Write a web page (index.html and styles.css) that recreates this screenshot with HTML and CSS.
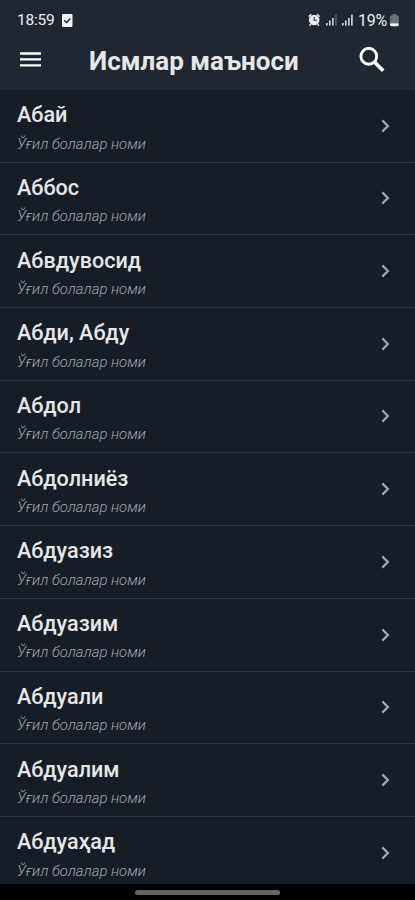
FILE: index.html
```html
<!DOCTYPE html>
<html lang="uz">
<head>
<meta charset="utf-8">
<title>Исмлар маъноси</title>
<link rel="stylesheet" href="styles.css">
</head>
<body>
<div class="screen">
  <header class="header">
    <div class="status">
      <span class="time">18:59</span>
      <svg class="check" width="11" height="13" viewBox="0 0 11 13"><rect width="10.5" height="13" rx="1" fill="#eef2f6"/><path d="M2.2 6.2l2.4 2.3 3.8-4" fill="none" stroke="#1e2732" stroke-width="1.4"/></svg>
      <svg class="indicators" width="48" height="14" viewBox="0 0 48 14">
        <circle cx="6.2" cy="7" r="5.300" fill="#e8eaed"/>
        <path d="M.8 3.6L3.4 1.2M9 1.2l2.6 2.4M2.7 11.2l-1.2 1.5M9.7 11.2l1.2 1.5" stroke="#e8eaed" stroke-width="1.5"/>
        <path d="M6.2 4v3.3h2.5" fill="none" stroke="#1e2732" stroke-width="1.1"/>
        <path d="M18.8 12.5v-2.5M21.8 12.5v-5M24.9 12.5v-7.5M34.8 12.5v-2.5M37.8 12.5v-5M40.9 12.5v-7.5M43.9 12.5v-11" stroke="#d5d9de" stroke-width="1.6"/>
        <path d="M27.9 12.5v-11" stroke="#59616b" stroke-width="1.6"/>
      </svg>
      <span class="percent">19%</span>
      <svg class="battery" width="9" height="13" viewBox="0 0 9 13"><path d="M2.4 0h4v1.4h1q1.4 0 1.4 1.4V9H0V2.800q0-1.4 1.4-1.4h1z" fill="#69717a"/><path d="M0 9.300h8.800v1.500q0 1.400-1.400 1.400h-6Q0 12.200 0 10.800z" fill="#f4f6f8"/></svg>
    </div>
    <div class="toolbar">
      <svg class="menu" width="21" height="15" viewBox="0 0 21 15"><path d="M0 1.500h21M0 7.400h21M0 13.300h21" stroke="#fff" stroke-width="2.300"/></svg>
      <h1>Исмлар маъноси</h1>
      <svg class="search" width="26" height="26" viewBox="0 0 26 26" fill="none" stroke="#fff"><circle cx="9.800" cy="9.300" r="7.900" stroke-width="2.900"/><path d="M15.200 14.800l9 9" stroke-width="3.700"/></svg>
    </div>
  </header>
  <main class="list">
    <div class="row"><div><h2>Абай</h2><p>Ўғил болалар номи</p></div><svg class="arrow" viewBox="0 0 9 14"><path d="M1.300 1.400L6.900 7l-5.600 5.600"/></svg></div>
    <div class="row"><div><h2>Аббос</h2><p>Ўғил болалар номи</p></div><svg class="arrow" viewBox="0 0 9 14"><path d="M1.300 1.400L6.900 7l-5.600 5.600"/></svg></div>
    <div class="row"><div><h2>Абвдувосид</h2><p>Ўғил болалар номи</p></div><svg class="arrow" viewBox="0 0 9 14"><path d="M1.300 1.400L6.900 7l-5.600 5.600"/></svg></div>
    <div class="row"><div><h2>Абди, Абду</h2><p>Ўғил болалар номи</p></div><svg class="arrow" viewBox="0 0 9 14"><path d="M1.300 1.400L6.900 7l-5.600 5.600"/></svg></div>
    <div class="row"><div><h2>Абдол</h2><p>Ўғил болалар номи</p></div><svg class="arrow" viewBox="0 0 9 14"><path d="M1.300 1.400L6.900 7l-5.600 5.600"/></svg></div>
    <div class="row"><div><h2>Абдолниёз</h2><p>Ўғил болалар номи</p></div><svg class="arrow" viewBox="0 0 9 14"><path d="M1.300 1.400L6.900 7l-5.600 5.600"/></svg></div>
    <div class="row"><div><h2>Абдуазиз</h2><p>Ўғил болалар номи</p></div><svg class="arrow" viewBox="0 0 9 14"><path d="M1.300 1.400L6.900 7l-5.600 5.600"/></svg></div>
    <div class="row"><div><h2>Абдуазим</h2><p>Ўғил болалар номи</p></div><svg class="arrow" viewBox="0 0 9 14"><path d="M1.300 1.400L6.900 7l-5.600 5.600"/></svg></div>
    <div class="row"><div><h2>Абдуали</h2><p>Ўғил болалар номи</p></div><svg class="arrow" viewBox="0 0 9 14"><path d="M1.300 1.400L6.900 7l-5.600 5.600"/></svg></div>
    <div class="row"><div><h2>Абдуалим</h2><p>Ўғил болалар номи</p></div><svg class="arrow" viewBox="0 0 9 14"><path d="M1.300 1.400L6.900 7l-5.600 5.600"/></svg></div>
    <div class="row"><div><h2>Абдуаҳад</h2><p>Ўғил болалар номи</p></div><svg class="arrow" viewBox="0 0 9 14"><path d="M1.300 1.400L6.900 7l-5.600 5.600"/></svg></div>
  </main>
  <footer class="navbar"><div class="handle"></div></footer>
</div>
</body>
</html>
```
FILE: styles.css
```css
* { box-sizing: border-box; }
body { margin: 0; background: #000; font-family: Roboto, "Noto Sans", sans-serif; }
h1, h2, p { margin: 0; }
svg { display: block; flex: none; }
.screen { height: 900px; display: flex; flex-direction: column; overflow: hidden; }
.header { height: 90px; flex: none; background: #1e2732; }
.status { height: 40px; display: flex; align-items: center; padding: 0 16px 0 17px; color: #eceff2; }
.time { width: 38px; font-size: 15.500px; letter-spacing: -0.200px; white-space: nowrap; }
.check { margin-left: 7px; }
.indicators { margin-left: auto; }
.percent { width: 30px; margin-left: 2px; font-size: 16px; letter-spacing: -0.300px; white-space: nowrap; }
.battery { margin-left: 2px; }
.toolbar { height: 40px; display: flex; align-items: center; padding: 0 30.500px 0 20px; }
.menu { margin-bottom: 2px; }
h1 { margin-left: 48px; width: 212px; padding-top: 2px; font-size: 26px; line-height: 38px; font-weight: 700; color: #e6e7e9; white-space: nowrap; }
.search { margin-left: auto; margin-bottom: 1px; }
.list { height: 794px; flex: none; overflow: hidden; background: #171d26; }
.row { height: 72.720px; display: flex; align-items: flex-start; justify-content: space-between; padding: 12.300px 25.500px 0 17px; border-bottom: 1px solid #303740; }
.row:first-child { height: 72.500px; }
h2 { font-size: 21.600px; line-height: 26px; font-weight: 500; color: #e6e7e9; white-space: nowrap; }
p { margin-top: 6.300px; font-size: 14.850px; line-height: 18px; font-weight: 300; font-style: italic; color: #a3a6ad; white-space: nowrap; }
.arrow { width: 9px; height: 14px; margin-top: 16.400px; fill: none; stroke: #a2a6ae; stroke-width: 2.200; }
.navbar { flex: 1; display: flex; justify-content: center; padding-top: 6px; background: #000; }
.handle { width: 145px; height: 5px; border-radius: 3px; background: #656565; }
```
